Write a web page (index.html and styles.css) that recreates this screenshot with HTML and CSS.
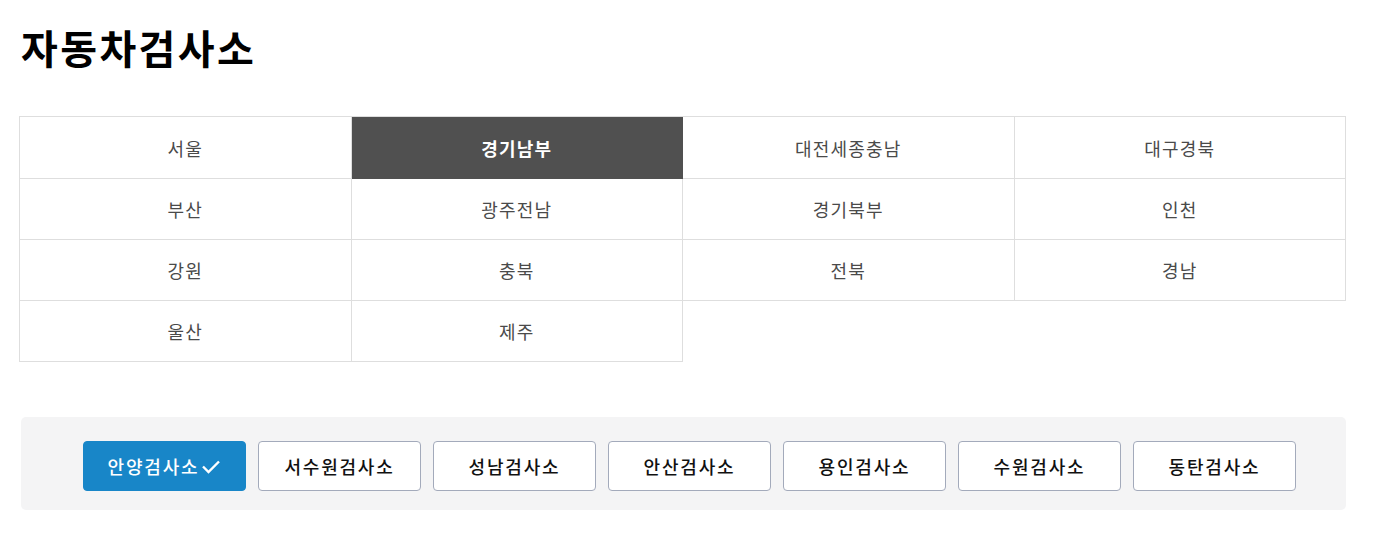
FILE: index.html
```html
<!DOCTYPE html>
<html lang="ko">
<head>
<meta charset="utf-8">
<title>자동차검사소</title>
<link rel="stylesheet" href="styles.css">
</head>
<body>
<div class="page">
  <h1 class="title">자동차검사소</h1>
  <div class="regions">
    <a class="cell">서울</a>
    <a class="cell active">경기남부</a>
    <a class="cell">대전세종충남</a>
    <a class="cell">대구경북</a>
    <a class="cell">부산</a>
    <a class="cell">광주전남</a>
    <a class="cell">경기북부</a>
    <a class="cell">인천</a>
    <a class="cell">강원</a>
    <a class="cell">충북</a>
    <a class="cell">전북</a>
    <a class="cell">경남</a>
    <a class="cell">울산</a>
    <a class="cell">제주</a>
  </div>
  <div class="centers">
    <a class="btn on">안양검사소<svg class="check" width="20" height="14" viewBox="0 0 20 14"><path d="M2 6.5 L7.5 12 L18 1.5" fill="none" stroke="#fff" stroke-width="2.4"/></svg></a>
    <a class="btn">서수원검사소</a>
    <a class="btn">성남검사소</a>
    <a class="btn">안산검사소</a>
    <a class="btn">용인검사소</a>
    <a class="btn">수원검사소</a>
    <a class="btn">동탄검사소</a>
  </div>
</div>
</body>
</html>
```

FILE: styles.css
```css
* { box-sizing: border-box; }
html, body { margin: 0; padding: 0; background: #fff; }
body { font-family: "Noto Sans CJK KR", "Noto Sans", sans-serif; color: #333; }
.page { padding: 18px 30px 0 19px; width: 1376px; }
.title {
  margin: 0 0 0 2px;
  font-size: 40px;
  font-weight: 700;
  letter-spacing: 2.4px;
  line-height: 58px;
  color: #000;
}
.regions {
  margin-top: 40px;
  width: 1327px;
  display: grid;
  grid-template-columns: repeat(4, 1fr);
  border-top: 1px solid #dedede;
  border-left: 1px solid #dedede;
}
.cell {
  height: 61px;
  display: flex;
  align-items: center;
  justify-content: center;
  border-right: 1px solid #dedede;
  border-bottom: 1px solid #dedede;
  font-size: 18px;
  font-weight: 400;
  color: #4a4a4a;
  letter-spacing: 1.2px;
}
.cell:nth-child(-n+4) { height: 62px; }
.cell.active {
  background: #505050;
  color: #fff;
  font-weight: 700;
  border-color: #505050;
}
.centers {
  margin-top: 55px;
  margin-left: 2px;
  width: 1325px;
  background: #f4f4f5;
  border-radius: 5px;
  padding: 24px 50px 19px 50px;
  display: flex;
}
.btn {
  margin-left: 12px;
  width: 163px;
  height: 50px;
  display: flex;
  align-items: center;
  justify-content: center;
  background: #fff;
  border: 1px solid #a3aabb;
  border-radius: 4px;
  font-size: 18px;
  font-weight: 500;
  color: #111;
  letter-spacing: 1.8px;
}
.btn.on {
  background: #1886c8;
  border-color: #1886c8;
  color: #fff;
}
.check { margin-left: 2px; margin-top: 1px; }
```
